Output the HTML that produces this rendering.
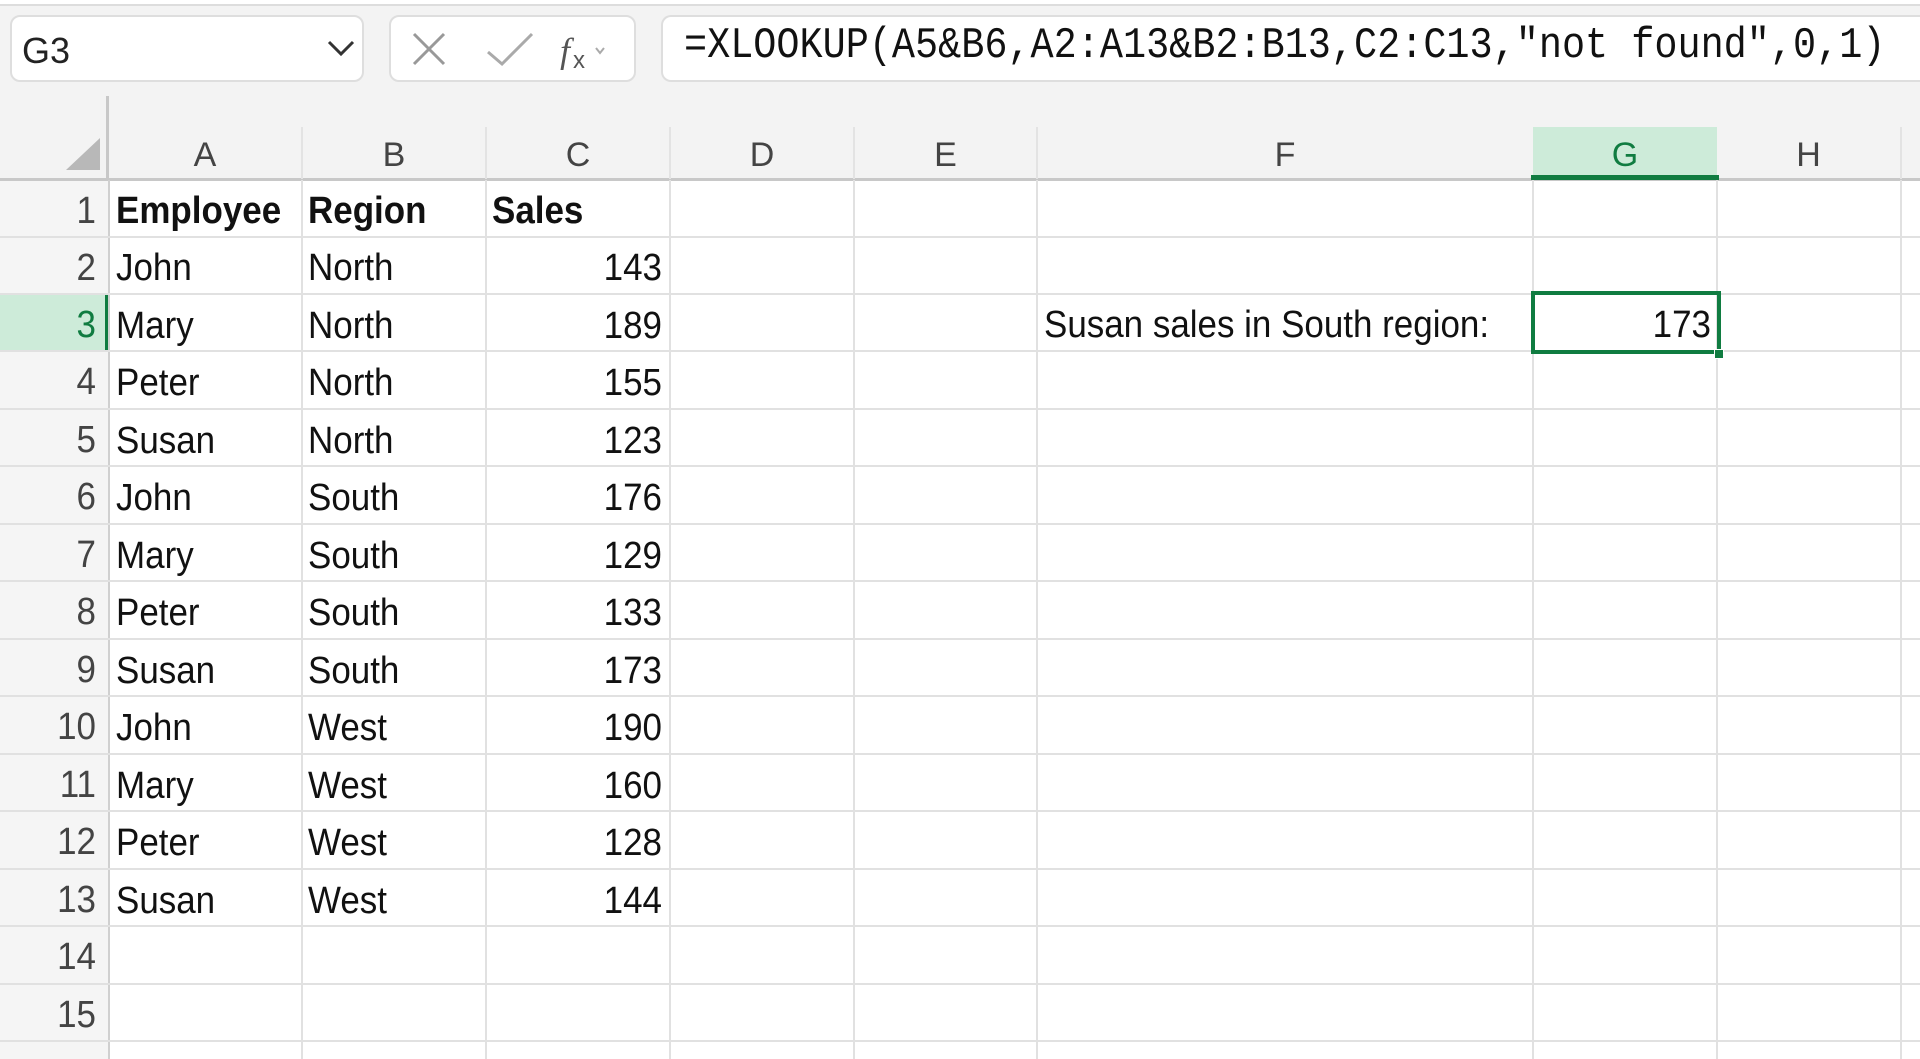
<!DOCTYPE html>
<html><head><meta charset="utf-8"><style>
*{margin:0;padding:0;box-sizing:border-box}
body{width:1920px;height:1059px;overflow:hidden;background:#f3f3f3;font-family:"Liberation Sans",sans-serif;position:relative}
.abs{position:absolute}
.box{background:#fff;border:2px solid #dedede;border-radius:10px}
.cell{position:absolute;font-size:38px;color:#111;line-height:60px;white-space:nowrap;transform:scaleX(0.92);transform-origin:left center}
.r{transform-origin:right center;text-align:right}
.hl{position:absolute;left:0;width:1920px;height:2px;background:#e1e1e1}
.vl{position:absolute;top:180px;height:879px;width:2px;background:#e1e1e1}
.ch{position:absolute;top:127px;height:52px;font-size:34px;color:#444;text-align:center;line-height:56px}
.rn{position:absolute;left:0;width:96px;text-align:right;font-size:38px;color:#444;line-height:60px;transform:scaleX(0.92);transform-origin:right center}
</style></head><body>
<div class="abs" style="left:0;top:0;width:1920px;height:6px;background:#fff;border-bottom:2px solid #ddd"></div>
<div class="abs box" style="left:10px;top:15px;width:354px;height:67px"></div>
<div class="abs" style="left:22px;top:26px;font-size:36px;color:#222;line-height:50px">G3</div>
<svg class="abs" style="left:326px;top:38px" width="30" height="20"><path d="M3 4 L15 16 L27 4" fill="none" stroke="#333" stroke-width="3"/></svg>
<div class="abs box" style="left:389px;top:15px;width:247px;height:67px"></div>
<svg class="abs" style="left:410px;top:30px" width="200" height="40"><path d="M4 4 L34 34 M34 4 L4 34" stroke="#999" stroke-width="3"/><path d="M78 22 L92 34 L122 4" fill="none" stroke="#aaa" stroke-width="3"/><text x="150" y="33" font-family="Liberation Serif" font-style="italic" font-size="36" fill="#555">f</text><text x="163" y="38" font-family="Liberation Sans" font-size="24" fill="#555">x</text><path d="M186 18 L190 23 L194 18" fill="none" stroke="#aaa" stroke-width="2"/></svg>
<div class="abs box" style="left:661px;top:15px;width:1280px;height:67px;border-right:none;border-radius:10px 0 0 10px"></div>
<div class="abs" style="left:684px;top:20px;font-family:'Liberation Mono',monospace;font-size:44px;line-height:52px;color:#111;white-space:nowrap;transform:scaleX(0.875);transform-origin:left center">=XLOOKUP(A5&amp;B6,A2:A13&amp;B2:B13,C2:C13,"not found",0,1)</div>
<div class="abs" style="left:0;top:180px;width:1920px;height:879px;background:#fff"></div>
<div class="abs" style="left:0;top:180px;width:108px;height:879px;background:#f5f5f5"></div>
<div class="abs" style="left:106px;top:96px;width:3px;height:84px;background:#c8c8c8"></div>
<div class="abs" style="left:0;top:178px;width:1920px;height:3px;background:#c8c8c8"></div>
<svg class="abs" style="left:64px;top:136px" width="38" height="36"><path d="M36 2 L36 34 L2 34 Z" fill="#b8b8b8"/></svg>
<div class="abs" style="left:1533px;top:127px;width:184px;height:52px;background:#cdebd9"></div>
<div class="abs" style="left:1531px;top:175px;width:188px;height:5px;background:#107c41"></div>
<div class="abs" style="left:0;top:294px;width:108px;height:57px;background:#cdebd9"></div>
<div class="abs" style="left:105px;top:294px;width:4px;height:57px;background:#107c41"></div>
<div class="abs" style="left:301px;top:127px;width:2px;height:52px;background:#e3e3e3"></div>
<div class="abs" style="left:485px;top:127px;width:2px;height:52px;background:#e3e3e3"></div>
<div class="abs" style="left:669px;top:127px;width:2px;height:52px;background:#e3e3e3"></div>
<div class="abs" style="left:853px;top:127px;width:2px;height:52px;background:#e3e3e3"></div>
<div class="abs" style="left:1036px;top:127px;width:2px;height:52px;background:#e3e3e3"></div>
<div class="abs" style="left:1900px;top:127px;width:2px;height:52px;background:#e3e3e3"></div>
<div class="ch" style="left:108px;width:194px">A</div>
<div class="ch" style="left:302px;width:184px">B</div>
<div class="ch" style="left:486px;width:184px">C</div>
<div class="ch" style="left:670px;width:184px">D</div>
<div class="ch" style="left:854px;width:183px">E</div>
<div class="ch" style="left:1037px;width:496px">F</div>
<div class="ch" style="left:1533px;width:184px;color:#107c41">G</div>
<div class="ch" style="left:1717px;width:183px">H</div>
<div class="vl" style="left:108px;background:#d0d0d0"></div>
<div class="vl" style="left:301px"></div><div class="vl" style="left:485px"></div><div class="vl" style="left:669px"></div><div class="vl" style="left:853px"></div><div class="vl" style="left:1036px"></div><div class="vl" style="left:1532px"></div><div class="vl" style="left:1716px"></div><div class="vl" style="left:1900px"></div>
<div class="hl" style="top:236px"></div><div class="hl" style="top:293px"></div><div class="hl" style="top:350px"></div><div class="hl" style="top:408px"></div><div class="hl" style="top:465px"></div><div class="hl" style="top:523px"></div><div class="hl" style="top:580px"></div><div class="hl" style="top:638px"></div><div class="hl" style="top:695px"></div><div class="hl" style="top:753px"></div><div class="hl" style="top:810px"></div><div class="hl" style="top:868px"></div><div class="hl" style="top:925px"></div><div class="hl" style="top:983px"></div><div class="hl" style="top:1040px"></div>
<div class="rn" style="top:181px">1</div><div class="rn" style="top:238px">2</div><div class="rn" style="top:295px;color:#107c41">3</div><div class="rn" style="top:352px">4</div><div class="rn" style="top:410px">5</div><div class="rn" style="top:467px">6</div><div class="rn" style="top:525px">7</div><div class="rn" style="top:582px">8</div><div class="rn" style="top:640px">9</div><div class="rn" style="top:697px">10</div><div class="rn" style="top:755px">11</div><div class="rn" style="top:812px">12</div><div class="rn" style="top:870px">13</div><div class="rn" style="top:927px">14</div><div class="rn" style="top:985px">15</div>
<div class="cell" style="left:116px;top:181px;font-weight:bold">Employee</div>
<div class="cell" style="left:308px;top:181px;font-weight:bold">Region</div>
<div class="cell" style="left:492px;top:181px;font-weight:bold">Sales</div>
<div id="d"></div>
<div class="cell" style="left:1044px;top:295px">Susan sales in South region:</div>
<div class="abs" style="left:1531px;top:291px;width:190px;height:63px;border:4px solid #107c41"></div>
<div class="abs" style="left:1714px;top:349px;width:10px;height:10px;background:#107c41;border:1px solid #fff"></div>
<div class="cell r" style="left:1533px;top:295px;width:178px">173</div>
<script>
var d=[["John","North",143],["Mary","North",189],["Peter","North",155],["Susan","North",123],["John","South",176],["Mary","South",129],["Peter","South",133],["Susan","South",173],["John","West",190],["Mary","West",160],["Peter","West",128],["Susan","West",144]];
var h="";d.forEach(function(r,i){var t=238+Math.round(i*57.5);
h+='<div class="cell" style="left:116px;top:'+t+'px">'+r[0]+'</div><div class="cell" style="left:308px;top:'+t+'px">'+r[1]+'</div><div class="cell r" style="left:486px;width:176px;top:'+t+'px">'+r[2]+'</div>';});
document.getElementById("d").innerHTML=h;
</script>
</body></html>
